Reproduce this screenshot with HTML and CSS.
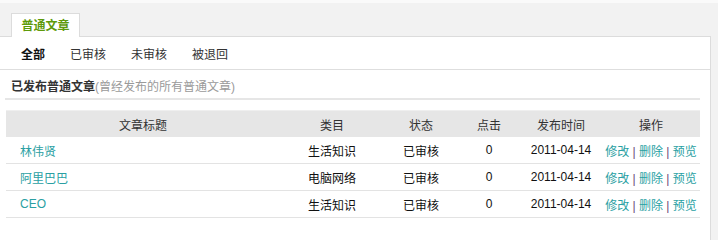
FILE: index.html
```html
<!DOCTYPE html>
<html lang="zh">
<head>
<meta charset="utf-8">
<title>普通文章</title>
<link rel="stylesheet" href="styles.css">
</head>
<body>
<div class="top-strip"></div>
<div class="tabbar">
  <div class="tab">普通文章</div>
</div>
<div class="panel">
  <nav class="subnav">
    <a class="sub active">全部</a>
    <a class="sub">已审核</a>
    <a class="sub">未审核</a>
    <a class="sub">被退回</a>
  </nav>
  <div class="section-title"><strong>已发布普通文章</strong><span class="hint">(曾经发布的所有普通文章)</span></div>
  <table class="list">
    <colgroup>
      <col class="c1"><col class="c2"><col class="c3"><col class="c4"><col class="c5"><col class="c6">
    </colgroup>
    <thead>
      <tr><th>文章标题</th><th>类目</th><th>状态</th><th>点击</th><th>发布时间</th><th>操作</th></tr>
    </thead>
    <tbody>
      <tr><td class="t"><a>林伟贤</a></td><td>生活知识</td><td>已审核</td><td>0</td><td>2011-04-14</td><td class="ops"><a>修改</a> <span class="sep">|</span> <a>删除</a> <span class="sep">|</span> <a>预览</a></td></tr>
      <tr><td class="t"><a>阿里巴巴</a></td><td>电脑网络</td><td>已审核</td><td>0</td><td>2011-04-14</td><td class="ops"><a>修改</a> <span class="sep">|</span> <a>删除</a> <span class="sep">|</span> <a>预览</a></td></tr>
      <tr><td class="t"><a>CEO</a></td><td>生活知识</td><td>已审核</td><td>0</td><td>2011-04-14</td><td class="ops"><a>修改</a> <span class="sep">|</span> <a>删除</a> <span class="sep">|</span> <a>预览</a></td></tr>
    </tbody>
  </table>
</div>
</body>
</html>
```
FILE: styles.css
```css
html, body {
  margin: 0;
  padding: 0;
}
body {
  background: #f2f2f2;
  font-family: "Liberation Sans", "Noto Sans CJK SC", sans-serif;
  font-size: 12px;
  color: #222;
}
.top-strip {
  height: 3px;
  background: #fafafa;
}
.tabbar {
  height: 33px;
  display: flex;
  align-items: flex-end;
  padding-left: 11px;
  width: 710px;
  box-sizing: border-box;
}
.tab {
  width: 69px;
  height: 24px;
  box-sizing: border-box;
  border: 1px solid #dcdcdc;
  border-bottom: none;
  background: #fff;
  color: #5e9a0a;
  font-weight: bold;
  text-align: center;
  line-height: 24px;
  margin-bottom: -1px;
  position: relative;
}
.panel {
  width: 711px;
  box-sizing: border-box;
  background: #fff;
  border-top: 1px solid #dcdcdc;
  border-right: 1px solid #dcdcdc;
  padding-bottom: 24px;
}
.subnav {
  display: flex;
  gap: 25px;
  padding-left: 21px;
  height: 32px;
  align-items: center;
  border-bottom: 1px solid #dedede;
}
.sub {
  color: #333;
}
.sub.active {
  color: #111;
  font-weight: bold;
}
.section-title {
  margin: 0 10px 0 5px;
  padding-left: 6px;
  height: 28px;
  line-height: 35px;
  border-bottom: 2px solid #e6e6e6;
  color: #333;
}
.section-title strong {
  color: #333;
}
.hint {
  color: #9a9a9a;
}
.list {
  margin: 10px 0 0 6px;
  width: 694px;
  border-collapse: collapse;
  table-layout: fixed;
  border-top: 1px solid #efefef;
}
.c1 { width: 274px; }
.c2 { width: 104px; }
.c3 { width: 74px; }
.c4 { width: 62px; }
.c5 { width: 82px; }
.c6 { width: 98px; }
.list th {
  background: #e6e6e6;
  font-weight: normal;
  color: #333;
  height: 26px;
  padding: 0;
  text-align: center;
}
.list td {
  height: 26px;
  padding: 0;
  text-align: center;
  color: #111;
  border-bottom: 1px solid #e3e3e3;
}
.list td.t {
  text-align: left;
  padding-left: 14px;
}
.list a {
  color: #2a9fa3;
}
.sep {
  color: #6c4a78;
}
```
